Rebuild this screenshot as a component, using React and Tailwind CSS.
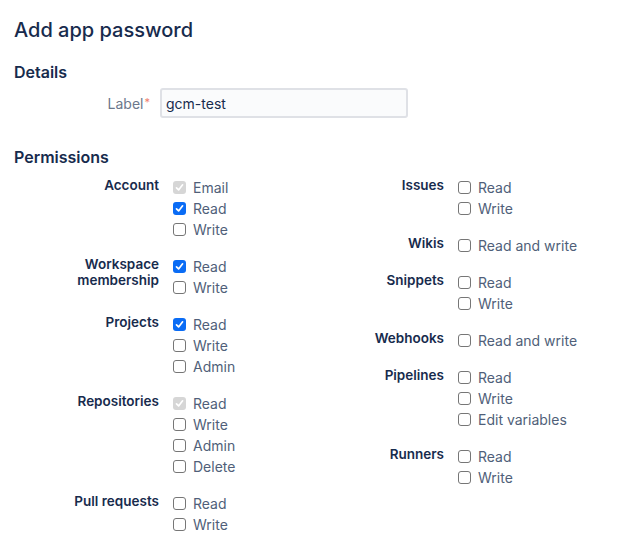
import React from "react";

const LEFT = [
  { name: "Account", options: [["Email", "disabled"], ["Read", "checked"], ["Write"]] },
  { name: "Workspace membership", options: [["Read", "checked"], ["Write"]] },
  { name: "Projects", options: [["Read", "checked"], ["Write"], ["Admin"]] },
  { name: "Repositories", options: [["Read", "disabled"], ["Write"], ["Admin"], ["Delete"]] },
  { name: "Pull requests", options: [["Read"], ["Write"]] },
];

const RIGHT = [
  { name: "Issues", options: [["Read"], ["Write"]] },
  { name: "Wikis", options: [["Read and write"]] },
  { name: "Snippets", options: [["Read"], ["Write"]] },
  { name: "Webhooks", options: [["Read and write"]] },
  { name: "Pipelines", options: [["Read"], ["Write"], ["Edit variables"]] },
  { name: "Runners", options: [["Read"], ["Write"]] },
];

function Box({ state }) {
  if (state === "checked" || state === "disabled") {
    return (
      <span
        className={
          "flex h-[13px] w-[13px] items-center justify-center rounded-[3px] " +
          (state === "checked" ? "bg-[#0a6cf5]" : "bg-[#d6d6d6]")
        }
      >
        <svg width="9" height="9" viewBox="0 0 9 9">
          <path d="M1.5 4.8 L3.6 6.9 L7.6 1.8" fill="none" stroke="white" strokeWidth="1.7" strokeLinecap="round" strokeLinejoin="round" />
        </svg>
      </span>
    );
  }
  return <span className="h-[13px] w-[13px] rounded-[3px] border border-[#767676] bg-white" />;
}

function Group({ group }) {
  return (
    <div className="flex items-start">
      <div className="w-[145px] text-right text-[13.5px] font-semibold leading-[16px] text-[#172b4d]">
        {group.name === "Workspace membership" ? (
          <>
            Workspace
            <br />
            membership
          </>
        ) : (
          group.name
        )}
      </div>
      <div className="ml-[14px] flex flex-col">
        {group.options.map(([label, state]) => (
          <div key={label} className="flex h-[21px] items-center gap-[7px]">
            <Box state={state} />
            <span className="text-[14px] text-[#505f79]">{label}</span>
          </div>
        ))}
      </div>
    </div>
  );
}

export default function App() {
  return (
    <div
      className="min-h-screen bg-white px-[14px] pt-[18px] text-[#172b4d]"
      style={{ fontFamily: "Inter, 'Noto Sans', sans-serif" }}
    >
      <h1 className="text-[20px] font-medium leading-[24px]">Add app password</h1>

      <h2 className="mt-[20px] text-[16px] font-semibold leading-[20px]">Details</h2>
      <div className="mt-[6px] flex items-center">
        <div className="w-[136px] text-right text-[14px] text-[#6b778c]">
          Label<span className="relative -top-[3px] ml-[1px] text-[11px] text-[#f0806a]">*</span>
        </div>
        <div className="ml-[10px] flex h-[30px] w-[248px] items-center rounded-[3px] border-2 border-[#dfe1e6] bg-[#fafbfc] px-[4px] text-[14px] text-[#172b4d]">
          gcm-test
        </div>
      </div>

      <h2 className="mt-[29px] text-[16px] font-semibold leading-[20px]">Permissions</h2>
      <div className="mt-[10px] grid grid-cols-[285px_285px]">
        <div className="flex flex-col gap-4">
          {LEFT.map((g) => (
            <Group key={g.name} group={g} />
          ))}
        </div>
        <div className="flex flex-col gap-4">
          {RIGHT.map((g) => (
            <Group key={g.name} group={g} />
          ))}
        </div>
      </div>
    </div>
  );
}
